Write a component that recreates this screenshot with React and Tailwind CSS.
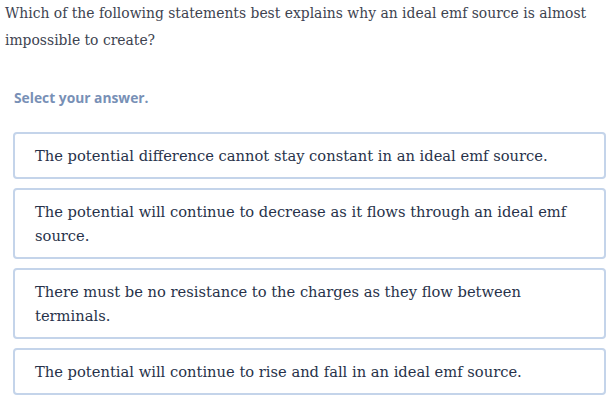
export default function App() {
  const options = [
    "The potential difference cannot stay constant in an ideal emf source.",
    "The potential will continue to decrease as it flows through an ideal emf source.",
    "There must be no resistance to the charges as they flow between terminals.",
    "The potential will continue to rise and fall in an ideal emf source.",
  ];
  return (
    <div className="w-[615px] h-[401px] bg-white overflow-hidden font-['DejaVu_Serif',serif]">
      <p className="pl-[5px] pr-[20px] pt-0 text-[13.9px] leading-[27px] text-[#3d4350]">
        Which of the following statements best explains why an ideal emf source is almost impossible to create?
      </p>
      <div className="mt-[34px] pl-[14px] text-[13.8px] leading-[20px] font-bold text-[#7890b6] font-['Open_Sans',sans-serif]">
        Select your answer.
      </div>
      <div className="mt-[24px] ml-[13px] w-[593px] flex flex-col gap-[9px]">
        {options.map((o, i) => (
          <div
            key={i}
            className="border-2 border-[#c4d4ea] rounded-[4px] pl-[20px] pr-[20px] pt-[10px] pb-[9px] text-[14.7px] leading-[24px] text-[#27324a]"
          >
            {o}
          </div>
        ))}
      </div>
    </div>
  );
}
